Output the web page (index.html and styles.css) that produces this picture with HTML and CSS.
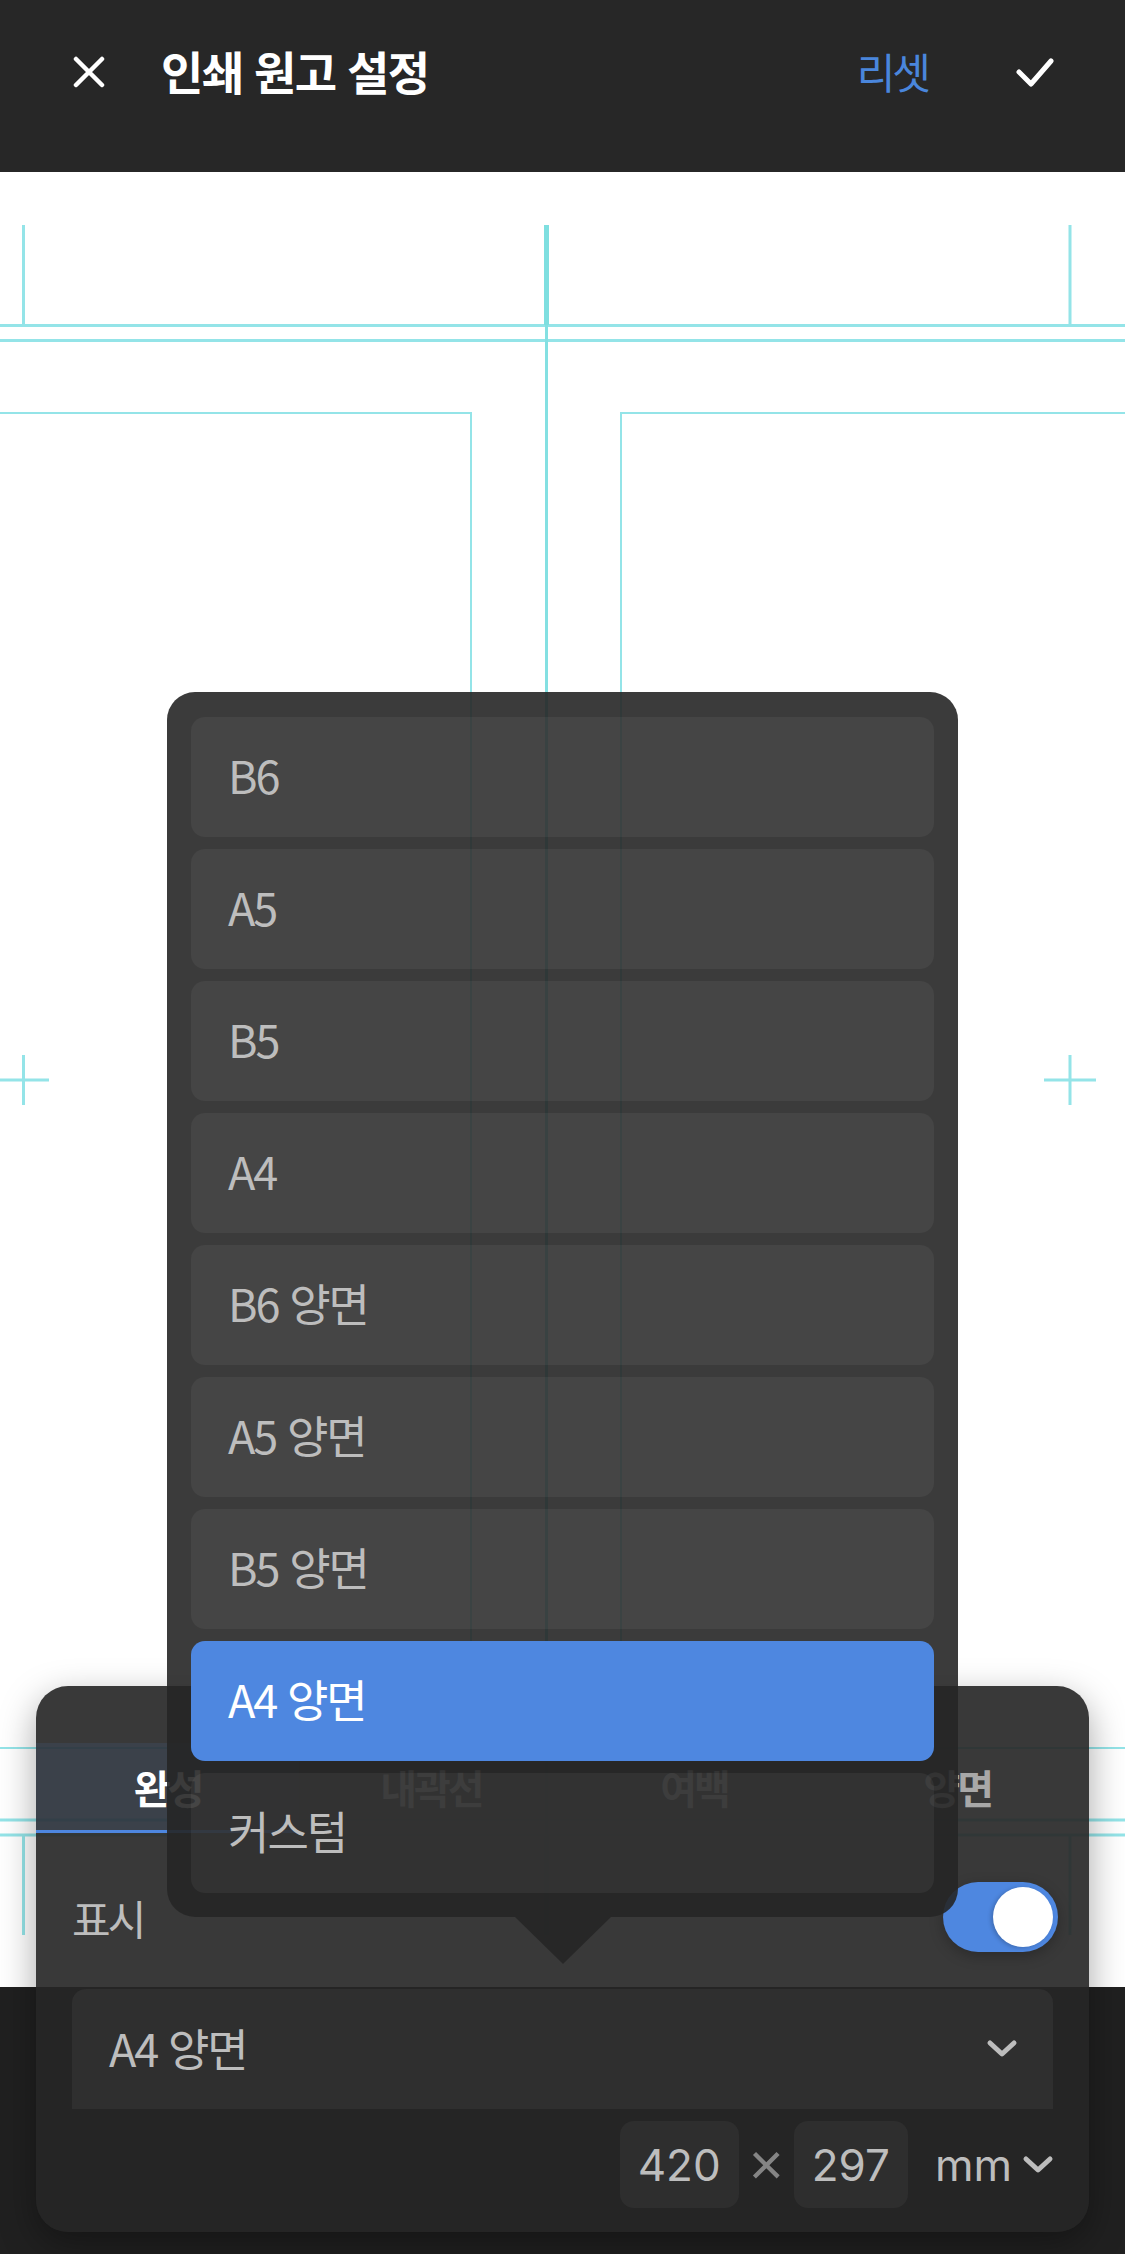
FILE: index.html
```html
<!DOCTYPE html>
<html lang="ko">
<head>
    <meta charset="UTF-8">
    <title>인쇄 원고 설정</title>
    <link rel="stylesheet" href="styles.css">
</head>
<body>
<div class="m-app">
    <!-- 상단 바 -->
    <div class="m-header">
        <span class="close">
            <svg width="32" height="32" viewBox="0 0 32 32"><path d="M3 3L29 29M29 3L3 29" stroke="#fff" stroke-width="4.5" stroke-linecap="round" fill="none"/></svg>
        </span>
        <h1 class="title">인쇄 원고 설정</h1>
        <span class="reset">리셋</span>
        <span class="done">
            <svg width="42" height="32" viewBox="0 0 42 32"><path d="M5 16L17 28L37 5" stroke="#fff" stroke-width="5" stroke-linecap="round" stroke-linejoin="round" fill="none"/></svg>
        </span>
    </div>

    <!-- 원고 가이드 -->
    <div class="m-canvas">
        <svg class="guide" width="1125" height="1815" viewBox="0 0 1125 1815">
            <g stroke="#94e4e8" stroke-width="3" fill="none">
                <path d="M0 153.5H1125M0 168.5H1125M0 1648H1125M0 1663H1125"/>
                <path d="M23.5 53V153M1070 53V153M23.5 1663V1763M1070 1663V1763"/>
                <path d="M-3 908H49M23.5 883V933M1044 908H1096M1070 883V933"/>
            </g>
            <path d="M0 241H471V1576H0M1125 241H621V1576H1125" stroke="#94e4e8" stroke-width="2" fill="none"/>
            <path d="M546.5 53V1763" stroke="#84e0e2" stroke-width="3"/>
            <path d="M546.5 53V153M546.5 1663V1763" stroke="#7fdfe0" stroke-width="5"/>
        </svg>
    </div>

    <div class="m-footer"></div>

    <!-- 설정 시트 -->
    <div class="m-sheet">
        <ul class="tabs">
            <li class="z-active">완성</li>
            <li>내곽선</li>
            <li>여백</li>
            <li>양면</li>
        </ul>
        <div class="row">
            <span class="label">표시</span>
            <span class="switch"><i></i></span>
        </div>
        <div class="select">
            <span>A4 양면</span>
            <svg width="32" height="20" viewBox="0 0 32 20"><path d="M4 4L16 15L28 4" stroke="#bdbdbd" stroke-width="5" stroke-linecap="round" stroke-linejoin="round" fill="none"/></svg>
        </div>
        <div class="size">
            <span class="num">420</span>
            <span class="times">×</span>
            <span class="num">297</span>
            <span class="unit">mm</span>
            <svg class="arrow" width="32" height="20" viewBox="0 0 32 20"><path d="M4 4L16 15L28 4" stroke="#bdbdbd" stroke-width="5" stroke-linecap="round" stroke-linejoin="round" fill="none"/></svg>
        </div>
    </div>

    <!-- 판형 선택 메뉴 -->
    <div class="m-menu">
        <ul>
            <li>B6</li>
            <li>A5</li>
            <li>B5</li>
            <li>A4</li>
            <li>B6 양면</li>
            <li>A5 양면</li>
            <li>B5 양면</li>
            <li class="z-active">A4 양면</li>
            <li>커스텀</li>
        </ul>
    </div>
</div>
</body>
</html>
```

FILE: styles.css
```css
html,body{
    margin: 0;
    padding: 0;
}
body{
    background: #202020;
    font-family: "Noto Sans CJK KR", sans-serif;
}
.m-app{
    position: relative;
    width: 1125px;
    height: 2254px;
    display: flex;
    flex-direction: column;
    overflow: hidden;
}

/* header */
.m-header{
    flex: none;
    height: 172px;
    box-sizing: border-box;
    padding-bottom: 32px;
    background: #272727;
    display: flex;
    align-items: center;
}
.m-header .close{
    margin: 4px 0 0 73px;
    display: flex;
}
.m-header .title{
    margin: 0 0 0 56px;
    font-size: 46px;
    font-weight: 700;
    color: #fff;
    letter-spacing: -1.5px;
}
.m-header .reset{
    margin-left: auto;
    font-size: 42px;
    color: #4a86dc;
    letter-spacing: -3px;
}
.m-header .done{
    margin: 4px 69px 0 86px;
    display: flex;
}

/* canvas */
.m-canvas{
    flex: 1;
    background: #fff;
}
.m-canvas .guide{
    display: block;
}
.m-footer{
    flex: none;
    height: 267px;
    background: #202020;
}

/* sheet */
.m-sheet{
    position: absolute;
    left: 36px;
    top: 1686px;
    width: 1053px;
    height: 546px;
    box-sizing: border-box;
    padding-top: 57px;
    border-radius: 32px;
    background: rgba(38,38,38,0.915);
    box-shadow: 0 12px 36px rgba(0,0,0,0.35);
}
.m-sheet .tabs{
    margin: 0;
    padding: 0;
    list-style: none;
    display: grid;
    grid-template-columns: repeat(4, 1fr);
}
.m-sheet .tabs li{
    height: 90px;
    box-sizing: border-box;
    border-bottom: 3px solid transparent;
    display: flex;
    align-items: center;
    justify-content: center;
    font-size: 40px;
    font-weight: 700;
    color: #a8a8a8;
    letter-spacing: -3px;
}
.m-sheet .tabs li.z-active{
    color: #fff;
    background: rgba(78,135,224,0.1);
    border-bottom-color: #4e87e0;
}
.m-sheet .row{
    display: flex;
    align-items: center;
    justify-content: space-between;
    padding: 49px 31px 37px 36px;
}
.m-sheet .label{
    font-size: 42px;
    color: #bdbdbd;
    letter-spacing: -3px;
}
.m-sheet .switch{
    position: relative;
    width: 115px;
    height: 70px;
    border-radius: 35px;
    background: #4e87e0;
    box-shadow: 0 4px 14px rgba(0,0,0,0.25);
}
.m-sheet .switch i{
    position: absolute;
    right: 5px;
    top: 5px;
    width: 60px;
    height: 60px;
    border-radius: 50%;
    background: #fff;
    box-shadow: -2px 1px 4px rgba(0,0,0,0.2);
}
.m-sheet .select{
    margin: 0 36px;
    height: 120px;
    box-sizing: border-box;
    padding: 0 35px 4px 37px;
    border-radius: 14px 14px 0 0;
    background: #2f2f2f;
    display: flex;
    align-items: center;
    justify-content: space-between;
    font-size: 45px;
    color: #bdbdbd;
    letter-spacing: -2px;
}
.m-sheet .select svg{
    margin-top: 4px;
}
.m-sheet .size{
    margin-top: 12px;
    height: 87px;
    padding-right: 35px;
    display: flex;
    align-items: center;
    justify-content: flex-end;
    color: #bdbdbd;
    font-family: Inter, "Noto Sans CJK KR", sans-serif;
    font-size: 44px;
}
.m-sheet .num{
    height: 87px;
    padding: 0 18px;
    border-radius: 14px;
    background: #2e2e2e;
    display: flex;
    align-items: center;
}
.m-sheet .times{
    margin: 0 10px;
    color: #858585;
    font-family: "Liberation Sans", sans-serif;
    font-size: 60px;
}
.m-sheet .unit{
    margin: 0 10px 0 27px;
}

/* menu */
.m-menu{
    position: absolute;
    left: 167px;
    top: 692px;
    width: 791px;
    box-sizing: border-box;
    padding: 25px 24px 24px;
    border-radius: 28px;
    background: rgba(38,38,38,0.9);
}
.m-menu::after{
    content: '';
    position: absolute;
    top: 100%;
    left: 50%;
    margin-left: -48px;
    border-top: 47px solid rgba(38,38,38,0.9);
    border-left: 48px solid transparent;
    border-right: 48px solid transparent;
}
.m-menu ul{
    margin: 0;
    padding: 0;
    list-style: none;
    display: flex;
    flex-direction: column;
    gap: 12px;
}
.m-menu li{
    height: 120px;
    box-sizing: border-box;
    padding: 0 0 5px 37px;
    border-radius: 14px;
    background: rgba(255,255,255,0.05);
    display: flex;
    align-items: center;
    font-size: 45px;
    color: #bdbdbd;
    letter-spacing: -2px;
}
.m-menu li.z-active{
    background: #4e87e0;
    color: #fff;
}
```
